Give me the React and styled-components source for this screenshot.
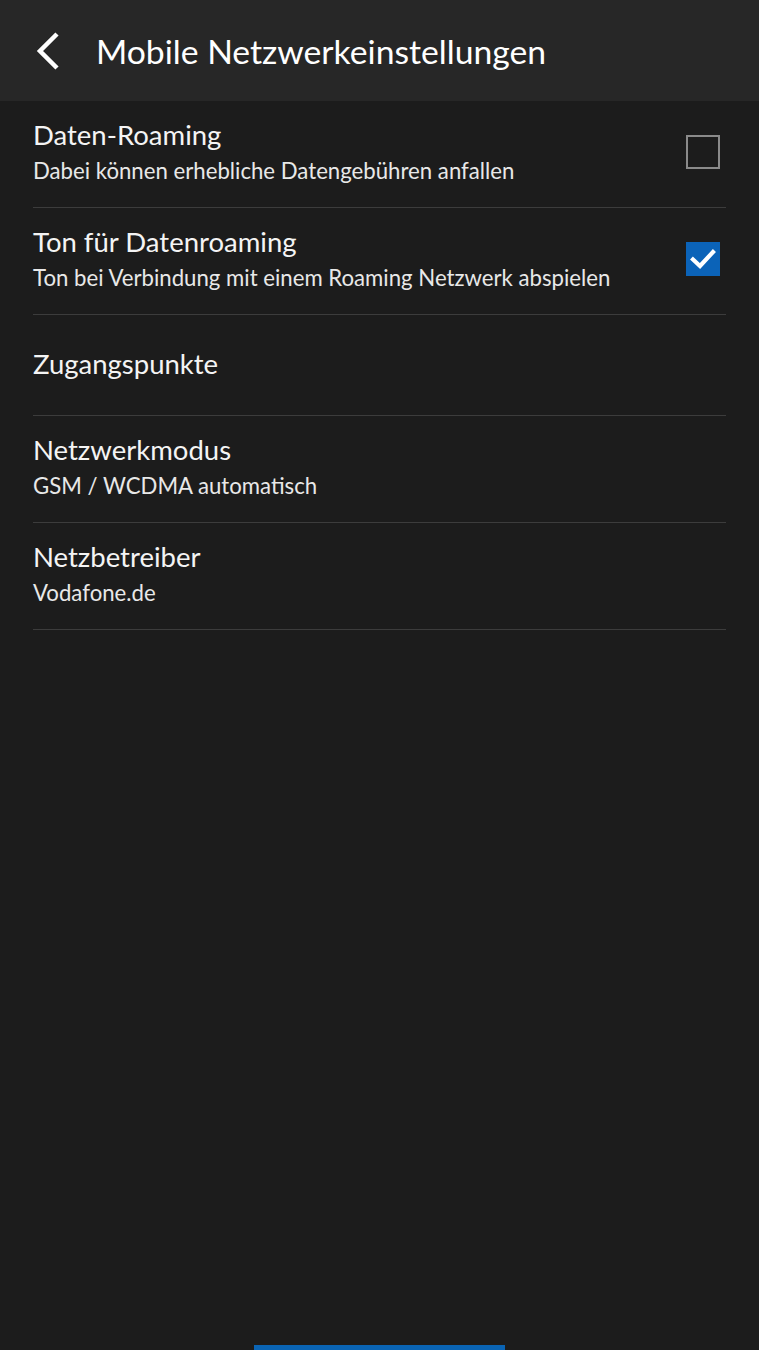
import React from "react";
import styled, { createGlobalStyle } from "styled-components";

const GlobalStyle = createGlobalStyle`
  html, body {
    margin: 0;
    padding: 0;
    background: #1c1c1c;
  }
  body {
    font-family: Lato, "Open Sans", sans-serif;
    color: #f2f2f2;
  }
`;

const Screen = styled.div`
  position: relative;
  width: 759px;
  height: 1350px;
  background: #1c1c1c;
  overflow: hidden;
  display: flex;
  flex-direction: column;
`;

const Header = styled.header`
  height: 101px;
  flex-shrink: 0;
  background: #272727;
  display: flex;
  align-items: center;
  padding-left: 33px;
  gap: 33px;
  box-sizing: border-box;
`;

const BackButton = styled.button`
  width: 30px;
  height: 44px;
  border: none;
  background: none;
  padding: 0;
  display: flex;
  align-items: center;
  justify-content: center;
  cursor: pointer;
`;

const HeaderTitle = styled.h1`
  margin: 0;
  font-size: 33.7px;
  font-weight: 400;
  color: #ffffff;
`;

const List = styled.ul`
  list-style: none;
  margin: 0;
  padding: 0 33px;
`;

const Row = styled.li`
  display: flex;
  align-items: center;
  justify-content: space-between;
  height: ${(p) => (p.$single ? "101px" : "107px")};
  border-bottom: 1px solid #3c3c3c;
  box-sizing: border-box;
`;

const TextBlock = styled.div`
  display: flex;
  flex-direction: column;
  gap: 4px;
  margin-top: ${(p) => (p.$single ? "-2px" : "-4px")};
`;

const Title = styled.div`
  font-size: 27.5px;
  line-height: 34px;
  color: #f4f4f4;
`;

const Subtitle = styled.div`
  font-size: 22.2px;
  line-height: 30px;
  color: #e8e8e8;
`;

const Box = styled.span`
  width: 34px;
  height: 34px;
  box-sizing: border-box;
  margin: 0 6px 4px 0;
  display: flex;
  align-items: center;
  justify-content: center;
  border: ${(p) => (p.$checked ? "none" : "2px solid #8a8a8a")};
  background: ${(p) => (p.$checked ? "#0b63b8" : "transparent")};
`;

const BottomBar = styled.div`
  position: absolute;
  left: 254px;
  bottom: 0;
  width: 251px;
  height: 5px;
  background: #0a64b4;
`;

function Checkbox({ checked }) {
  return (
    <Box $checked={checked}>
      {checked && (
        <svg width="28" height="28" viewBox="0 0 28 28">
          <path
            d="M4 14.5 L11 21 L24 7"
            fill="none"
            stroke="#ffffff"
            strokeWidth="4.2"
            strokeLinecap="square"
          />
        </svg>
      )}
    </Box>
  );
}

const items = [
  { title: "Daten-Roaming", sub: "Dabei können erhebliche Datengebühren anfallen", check: false },
  { title: "Ton für Datenroaming", sub: "Ton bei Verbindung mit einem Roaming Netzwerk abspielen", check: true },
  { title: "Zugangspunkte" },
  { title: "Netzwerkmodus", sub: "GSM / WCDMA automatisch" },
  { title: "Netzbetreiber", sub: "Vodafone.de" },
];

export default function App() {
  return (
    <Screen>
      <GlobalStyle />
      <Header>
        <BackButton aria-label="Zurück">
          <svg width="30" height="40" viewBox="0 0 30 40">
            <path
              d="M24 3 L7 20 L24 37"
              fill="none"
              stroke="#ffffff"
              strokeWidth="4.5"
            />
          </svg>
        </BackButton>
        <HeaderTitle>Mobile Netzwerkeinstellungen</HeaderTitle>
      </Header>
      <List>
        {items.map((item) => (
          <Row key={item.title} $single={!item.sub}>
            <TextBlock $single={!item.sub}>
              <Title>{item.title}</Title>
              {item.sub && <Subtitle>{item.sub}</Subtitle>}
            </TextBlock>
            {item.check !== undefined && <Checkbox checked={item.check} />}
          </Row>
        ))}
      </List>
      <BottomBar />
    </Screen>
  );
}
